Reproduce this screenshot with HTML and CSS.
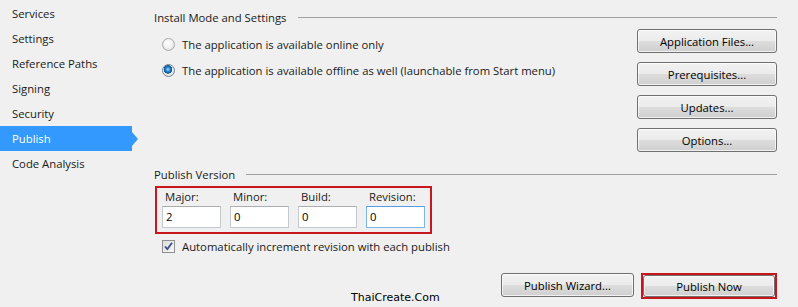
FILE: index.html
```html
<!DOCTYPE html>
<html>
<head>
<meta charset="utf-8">
<link rel="stylesheet" href="styles.css">
</head>
<body>
<div class="page">
  <ul class="sidebar">
    <li class="nav-item">Services</li>
    <li class="nav-item">Settings</li>
    <li class="nav-item">Reference Paths</li>
    <li class="nav-item">Signing</li>
    <li class="nav-item">Security</li>
    <li class="nav-item active">Publish</li>
    <li class="nav-item">Code Analysis</li>
  </ul>
  <div class="main">
    <div class="group-title"><span>Install Mode and Settings</span><div class="rule"></div></div>
    <div class="install-row">
      <div class="radios">
        <label class="radio-row"><span class="radio"></span><span>The application is available online only</span></label>
        <label class="radio-row"><span class="radio checked"></span><span>The application is available offline as well (launchable from Start menu)</span></label>
      </div>
      <div class="side-buttons">
        <div class="btn side-btn">Application Files...</div>
        <div class="btn side-btn">Prerequisites...</div>
        <div class="btn side-btn">Updates...</div>
        <div class="btn side-btn">Options...</div>
      </div>
    </div>
    <div class="group-title second"><span>Publish Version</span><div class="rule"></div></div>
    <div class="version-box">
      <div class="field"><span class="field-label">Major:</span><div class="input">2</div></div>
      <div class="field"><span class="field-label">Minor:</span><div class="input">0</div></div>
      <div class="field"><span class="field-label">Build:</span><div class="input">0</div></div>
      <div class="field"><span class="field-label">Revision:</span><div class="input focused">0</div></div>
    </div>
    <label class="check-row"><span class="checkbox"><svg width="11" height="11" viewBox="0 0 11 11"><path d="M2 5.5 L4.3 8.2 L9 1.8" fill="none" stroke="#3b4f8c" stroke-width="1.8" stroke-linejoin="round"/></svg></span><span>Automatically increment revision with each publish</span></label>
    <div class="bottom-row">
      <div class="btn wizard-btn">Publish Wizard...</div>
      <div class="highlight-box"><div class="btn now-btn">Publish Now</div></div>
    </div>
  </div>
  <div class="watermark">ThaiCreate.Com</div>
</div>
</body>
</html>
```
FILE: styles.css
```css
html, body {
  margin: 0;
  padding: 0;
  background: #f0f0f0;
}
body {
  font-family: "Open Sans", "Noto Sans", sans-serif;
  font-size: 11.3px;
  color: #1a1a1a;
  width: 798px;
  height: 307px;
  overflow: hidden;
}
.page {
  position: relative;
  display: flex;
  height: 307px;
}
.sidebar {
  list-style: none;
  margin: 0;
  padding: 1px 0 0 0;
  width: 154px;
  flex: none;
}
.nav-item {
  position: relative;
  width: 120px;
  height: 25px;
  line-height: 25px;
  padding-left: 12px;
}
.nav-item.active {
  background: #3399ff;
  color: #ffffff;
}
.nav-item.active::after {
  content: "";
  position: absolute;
  left: 132px;
  top: 6px;
  border-top: 7px solid transparent;
  border-bottom: 7px solid transparent;
  border-left: 6px solid #3399ff;
}
.main {
  width: 623px;
  flex: none;
}
.group-title {
  display: flex;
  align-items: center;
  height: 18px;
  margin-top: 8px;
}
.group-title.second {
  margin-top: 13px;
}
.rule {
  flex: 1;
  height: 1px;
  background: #a0a0a0;
  margin-left: 11px;
}
.install-row {
  display: flex;
  justify-content: space-between;
  margin-top: 3px;
}
.radios {
  padding-top: 2px;
  padding-left: 8px;
}
.radio-row {
  display: flex;
  align-items: center;
  height: 26px;
}
.radio {
  width: 11px;
  height: 11px;
  border-radius: 50%;
  border: 1px solid #a8a8a8;
  background: radial-gradient(circle at 45% 40%, #ffffff 0%, #f2f2f2 45%, #d6d6d6 100%);
  margin-right: 7px;
  flex: none;
  box-sizing: content-box;
}
.radio.checked {
  background:
    radial-gradient(circle at 45% 40%, #a9e4ff 0px, #2b8fd6 2px, #0d4f8e 4px, transparent 4.5px),
    radial-gradient(circle at 45% 40%, #ffffff 0%, #eaeaea 60%, #cfcfcf 100%);
  border-color: #6f8396;
}
.side-buttons {
  display: flex;
  flex-direction: column;
  gap: 9px;
}
.btn {
  box-sizing: border-box;
  border: 1px solid #707070;
  border-radius: 3px;
  background: linear-gradient(#f2f2f2 0%, #ebebeb 50%, #dddddd 51%, #cfcfcf 100%);
  box-shadow: inset 0 0 0 1px rgba(255, 255, 255, 0.7);
  display: flex;
  align-items: center;
  justify-content: center;
  color: #000;
}
.side-btn {
  width: 140px;
  height: 24px;
}
.version-box {
  display: flex;
  gap: 9px;
  margin-top: 3px;
  margin-left: 1px;
  width: 277px;
  height: 48px;
  box-sizing: border-box;
  border: 2px solid #c8171c;
  padding: 2px 5px 0 5px;
}
.field {
  display: flex;
  flex-direction: column;
  width: 59px;
}
.field-label {
  height: 14px;
  line-height: 14px;
  padding-left: 3px;
}
.input {
  margin-top: 2px;
  box-sizing: border-box;
  height: 22px;
  background: #ffffff;
  border: 1px solid #c5c9d1;
  border-top-color: #abadb3;
  padding-left: 3px;
  line-height: 20px;
  color: #000;
}
.input.focused {
  border-color: #7eb4ea;
  border-top-color: #569de5;
}
.check-row {
  display: flex;
  align-items: center;
  height: 14px;
  margin-top: 5px;
  padding-left: 8px;
}
.checkbox {
  width: 11px;
  height: 11px;
  border: 1px solid #8e8f8f;
  background: linear-gradient(135deg, #dcdcdc, #f8f8f8);
  margin-right: 7px;
  display: flex;
  align-items: center;
  justify-content: center;
  flex: none;
}
.bottom-row {
  display: flex;
  justify-content: flex-end;
  align-items: flex-start;
  gap: 7px;
  margin-top: 20px;
}
.wizard-btn {
  width: 133px;
  height: 24px;
}
.highlight-box {
  border: 2px solid #c8171c;
  width: 136px;
  height: 26px;
  box-sizing: border-box;
}
.now-btn {
  width: 132px;
  height: 22px;
}
.watermark {
  position: absolute;
  left: 351px;
  top: 291px;
  font-family: "DejaVu Sans", sans-serif;
  font-size: 11px;
  color: #000;
}
```
